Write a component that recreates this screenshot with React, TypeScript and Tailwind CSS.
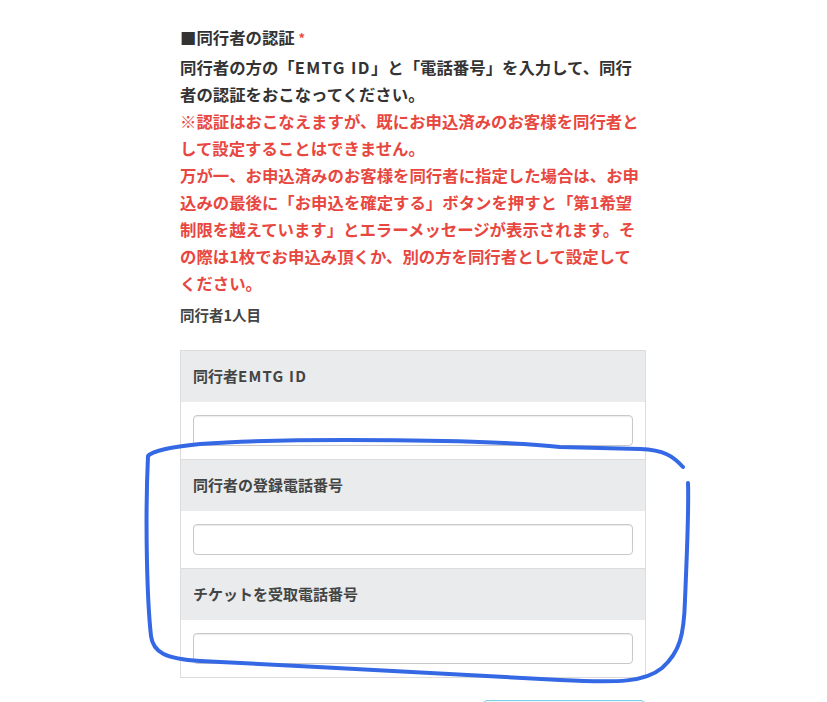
import React from 'react';

const font = "font-['Noto_Sans_CJK_JP','Noto_Sans',sans-serif]";

const Field: React.FC<{ label: React.ReactNode }> = ({ label }) => (
  <>
    <div className="h-[51px] bg-[#e9ebec] flex items-center pl-[12px] text-[15px] font-bold text-[#444]">
      {label}
    </div>
    <div className="h-[57px] bg-white flex items-center px-[12px]">
      <input
        type="text"
        className="w-full h-[31px] rounded-[4px] border border-[#c9c9c9] bg-white shadow-[inset_0_1px_1px_rgba(0,0,0,0.08)] outline-none"
      />
    </div>
  </>
);

export default function App() {
  return (
    <div className={`relative w-[827px] h-[702px] overflow-hidden bg-white ${font}`}>
      <div className="flex flex-col pl-[180px] pt-[24px]">
        <div className="text-[16.4px] leading-[27px] font-bold text-[#333] whitespace-nowrap">
          ■同行者の認証 <span className="text-[#e8473f] text-[13px] align-top">*</span>
        </div>
        <div className="mt-[3px] text-[16.4px] leading-[27px] font-bold text-[#333] whitespace-nowrap">
          同行者の方の「<span className="tracking-[1.4px]">EMTG ID</span>」と「電話番号」を入力して、同行
          <br />
          者の認証をおこなってください。
        </div>
        <div className="text-[16.4px] leading-[27px] font-bold text-[#e8473f] whitespace-nowrap">
          ※認証はおこなえますが、既にお申込済みのお客様を同行者と
          <br />
          して設定することはできません。
          <br />
          万が一、お申込済みのお客様を同行者に指定した場合は、お申
          <br />
          込みの最後に「お申込を確定する」ボタンを押すと「第1希望
          <br />
          制限を越えています」とエラーメッセージが表示されます。そ
          <br />
          の際は1枚でお申込み頂くか、別の方を同行者として設定して
          <br />
          ください。
        </div>
        <div className="mt-[4px] text-[14.5px] leading-[27px] font-bold text-[#444]">同行者1人目</div>

        <div className="mt-[22px] w-[466px] border border-[#dcdcdc] flex flex-col">
          <Field label={<>同行者<span className="tracking-[1.2px]">EMTG ID</span></>} />
          <div className="border-t border-[#dcdcdc]" />
          <Field label="同行者の登録電話番号" />
          <div className="border-t border-[#dcdcdc]" />
          <Field label="チケットを受取電話番号" />
        </div>

        <div className="mt-[22px] ml-[303px] w-[162px] h-[40px] rounded-[4px] border border-[#7fcfe3] bg-[#eaf8fc]" />
      </div>

      <svg className="absolute inset-0 pointer-events-none" width="827" height="702" viewBox="0 0 827 702">
        <path
          d="M683,467 C673,456 664,450 640,449 L560,447 C500,440 300,437 200,444 C172,447 153,450 148,456 C145,520 147,600 151,636 C153,652 165,659 200,661 C320,667 450,674 560,680 C620,683 645,682 662,668 C680,652 684,635 685,600 C687,550 689,510 688,483"
          fill="none"
          stroke="#3468e4"
          strokeWidth="4"
          strokeLinecap="round"
          strokeLinejoin="round"
        />
      </svg>
    </div>
  );
}
